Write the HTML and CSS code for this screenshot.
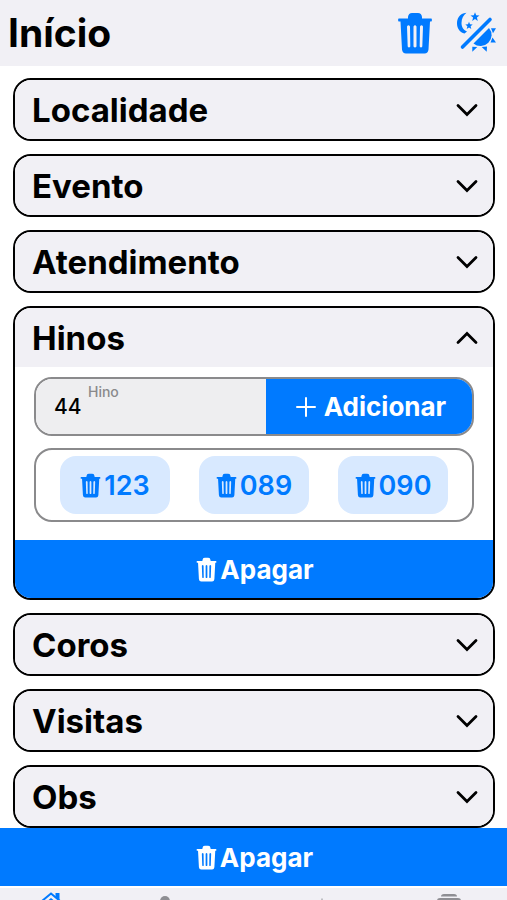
FILE: index.html
```html
<!DOCTYPE html>
<html lang="pt">
<head>
<meta charset="utf-8">
<meta name="viewport" content="width=device-width, initial-scale=1">
<title>Início</title>
<link rel="stylesheet" href="styles.css">
</head>
<body>
<svg class="sprite" aria-hidden="true">
  <symbol id="trash" viewBox="0 0 36 42">
    <path fill="currentColor" fill-rule="evenodd" d="M1.500 6.500H11V5Q11.500 1 15 1H21Q24.500 1 25 5V6.500H34.500Q35.500 8 34.500 9.500H33L31.500 37.500Q31 41.500 27.500 41.500H9Q5.500 41.500 5 37.500L3.500 9.500H1.500Q.5 8 1.500 6.500ZM10 14.500L10.700 34.500Q12 36.500 13.300 34.500L13 14.500Q11.500 12 10 14.500ZM16.500 14.500V34.500Q18 36.500 19.500 34.500V14.500Q18 12 16.500 14.500ZM23 14.500L22.700 34.500Q24 36.500 25.300 34.500L26 14.500Q24.500 12 23 14.500Z"/>
  </symbol>
  <symbol id="chevron" viewBox="0 0 22 14">
    <path d="M2 2.500L11 11.500L20 2.500" fill="none" stroke="currentColor" stroke-width="2.800" stroke-linecap="round"/>
  </symbol>
</svg>
<header class="header">
  <h1 class="title">Início</h1>
  <div class="tools">
    <button class="tool" aria-label="Apagar tudo"><svg class="trash-large"><use href="#trash"/></svg></button>
    <button class="tool" aria-label="Alternar tema">
      <svg class="theme" viewBox="0 0 42 42" fill="currentColor">
        <path d="M11.500 .8C4 1.500 2 7 2 11.500C2 16.500 5 20.500 9.500 21.500L12 19.500C8 18 6.500 14.500 6.500 11C6.500 6.500 8.500 3 11.500 .8Z"/>
        <path d="M20 .2L21.200 3.300L24.500 3.500L21.900 5.600L22.800 8.900L20 7.100L17.200 8.900L18.100 5.600L15.500 3.500L18.800 3.300Z"/>
        <path d="M14 9.700L15 12.300L17.700 12.400L15.600 14.200L16.300 16.900L14 15.400L11.700 16.900L12.400 14.200L10.300 12.400L13 12.300Z"/>
        <path d="M7.500 35L35 7.500" stroke="currentColor" stroke-width="3.600" stroke-linecap="round"/>
        <path d="M34 16A11 11 0 0 1 18.500 31.500Z"/>
        <path d="M36 16.300L41 16.300L38 21.300ZM37.500 25.500L41 30.500L35.500 30.500ZM26.700 35L32 34.500L31.700 39.700ZM17.300 34.700L22.300 35L17.300 39.700Z"/>
      </svg>
    </button>
  </div>
</header>
<main class="content">
  <section class="card"><button class="card-head">Localidade<svg class="chevron"><use href="#chevron"/></svg></button></section>
  <section class="card"><button class="card-head">Evento<svg class="chevron"><use href="#chevron"/></svg></button></section>
  <section class="card"><button class="card-head">Atendimento<svg class="chevron"><use href="#chevron"/></svg></button></section>
  <section class="card">
    <button class="card-head" aria-expanded="true">Hinos<svg class="chevron up"><use href="#chevron"/></svg></button>
    <div class="card-body">
      <div class="entry">
        <div class="field">
          <label class="field-label" for="hino">Hino</label>
          <input class="field-input" id="hino" type="text" value="44">
        </div>
        <button class="add"><svg class="plus" viewBox="0 0 20 20"><path d="M10 1V19M1 10H19" stroke="currentColor" stroke-width="2" stroke-linecap="round"/></svg>Adicionar</button>
      </div>
      <div class="chips">
        <button class="chip"><svg class="trash-small"><use href="#trash"/></svg>123</button>
        <button class="chip"><svg class="trash-small"><use href="#trash"/></svg>089</button>
        <button class="chip"><svg class="trash-small"><use href="#trash"/></svg>090</button>
      </div>
    </div>
    <button class="clear"><svg class="trash-small"><use href="#trash"/></svg>Apagar</button>
  </section>
  <section class="card"><button class="card-head">Coros<svg class="chevron"><use href="#chevron"/></svg></button></section>
  <section class="card"><button class="card-head">Visitas<svg class="chevron"><use href="#chevron"/></svg></button></section>
  <section class="card"><button class="card-head">Obs<svg class="chevron"><use href="#chevron"/></svg></button></section>
</main>
<button class="clear"><svg class="trash-small"><use href="#trash"/></svg>Apagar</button>
<nav class="tabs">
  <a class="tab active" href="#inicio" aria-label="Início"><svg class="tab-icon" viewBox="0 0 30 30"><path d="M3 15.500L15 5.500L27 15.500" fill="none" stroke="currentColor" stroke-width="2"/><path d="M7 16.500L15 10L23 16.500V27H7ZM19.500 5H23.500V12L19.500 8.500Z" fill="currentColor"/></svg></a>
  <a class="tab" href="#pessoas" aria-label="Pessoas"><svg class="tab-icon" viewBox="0 0 30 30"><circle cx="15" cy="13" r="5" fill="currentColor"/><path d="M5 28Q5 18 15 18T25 28Z" fill="currentColor"/></svg></a>
  <a class="tab" href="#novo" aria-label="Novo"><svg class="tab-icon" viewBox="0 0 30 30"><path d="M14.500 10.500H15.500V28H14.500Z" fill="currentColor"/></svg></a>
  <a class="tab" href="#arquivo" aria-label="Arquivo"><svg class="tab-icon" viewBox="0 0 30 30"><path d="M7 8.500Q7 6 10 6H20Q23 6 23 8.500ZM3 12.500Q3 10 6 10H24Q27 10 27 12.500V28H3Z" fill="currentColor"/></svg></a>
</nav>
</body>
</html>
```

FILE: styles.css
```css
* {
  box-sizing: border-box;
}

body {
  margin: 0;
  height: 100vh;
  display: flex;
  flex-direction: column;
  overflow: hidden;
  background: #fff;
  color: #000;
  font-family: Inter, "Liberation Sans", sans-serif;
}

button {
  border: 0;
  padding: 0;
  margin: 0;
  background: none;
  color: inherit;
  font: inherit;
  cursor: pointer;
}

svg {
  display: block;
  flex: none;
}

.sprite {
  position: absolute;
  width: 0;
  height: 0;
}

.header {
  flex: none;
  display: flex;
  align-items: center;
  justify-content: space-between;
  height: 66px;
  padding: 0 10px 0 8px;
  background: #f1f0f5;
}

.title {
  margin: 0;
  font-size: 39px;
  line-height: 44px;
  font-weight: 700;
}

.tools {
  display: flex;
  align-items: center;
  gap: 22px;
  color: #007aff;
}

.trash-large {
  width: 36px;
  height: 42px;
}

.theme {
  width: 42px;
  height: 42px;
}

.content {
  flex: 1;
  min-height: 0;
  overflow: hidden;
  display: flex;
  flex-direction: column;
  gap: 13px;
  padding: 12px 12px 0 13px;
}

.card {
  flex: none;
  display: flex;
  flex-direction: column;
  border: 2px solid #000;
  border-radius: 18px;
  overflow: hidden;
}

.card-head {
  display: flex;
  align-items: center;
  justify-content: space-between;
  height: 59px;
  padding: 0 15px 0 17px;
  background: #f1f0f5;
  font-size: 33px;
  font-weight: 700;
}

.chevron {
  width: 22px;
  height: 14px;
}

.up {
  transform: rotate(180deg);
}

.card-body {
  display: flex;
  flex-direction: column;
  gap: 12px;
  padding: 10px 19px 18px;
}

.entry {
  display: flex;
  height: 59px;
  border: 2px solid #8a8a8c;
  border-radius: 18px;
  overflow: hidden;
}

.field {
  position: relative;
  flex: 10;
  min-width: 0;
  background: #eeeef0;
}

.field-label {
  position: absolute;
  top: 5px;
  left: 52px;
  color: #8a8a8c;
  font-size: 14px;
  line-height: 16px;
  font-weight: 500;
}

.field-input {
  width: 100%;
  height: 100%;
  border: 0;
  padding: 0 18px;
  background: none;
  color: #000;
  font: 500 21px Inter, "Liberation Sans", sans-serif;
}

.add {
  width: 206px;
  display: flex;
  align-items: center;
  justify-content: center;
  gap: 8px;
  padding-left: 4px;
  background: #007aff;
  color: #fff;
  font-size: 26px;
  font-weight: 700;
}

.plus {
  width: 20px;
  height: 20px;
}

.chips {
  display: flex;
  align-items: center;
  justify-content: space-between;
  height: 74px;
  padding: 0 24px;
  border: 2px solid #8a8a8c;
  border-radius: 18px;
}

.chip {
  display: flex;
  align-items: center;
  justify-content: center;
  gap: 3px;
  width: 110px;
  height: 58px;
  border-radius: 16px;
  background: #d8e9ff;
  color: #007aff;
  font-size: 27px;
  font-weight: 600;
}

.trash-small {
  width: 21px;
  height: 25px;
}

.clear {
  flex: none;
  display: flex;
  align-items: center;
  justify-content: center;
  gap: 3px;
  height: 58px;
  padding-left: 2px;
  background: #007aff;
  color: #fff;
  font-size: 26px;
  font-weight: 700;
}

.tabs {
  flex: none;
  display: grid;
  grid-template-columns: 20fr 25fr 37fr 13fr 5fr;
  height: 14px;
  border-top: 2px solid #fff;
  background: #f1f0f5;
  overflow: hidden;
}

.tab {
  display: flex;
  justify-content: center;
  color: #8e8e93;
}

.active {
  color: #007aff;
}

.tab-icon {
  width: 30px;
  height: 30px;
}
```
